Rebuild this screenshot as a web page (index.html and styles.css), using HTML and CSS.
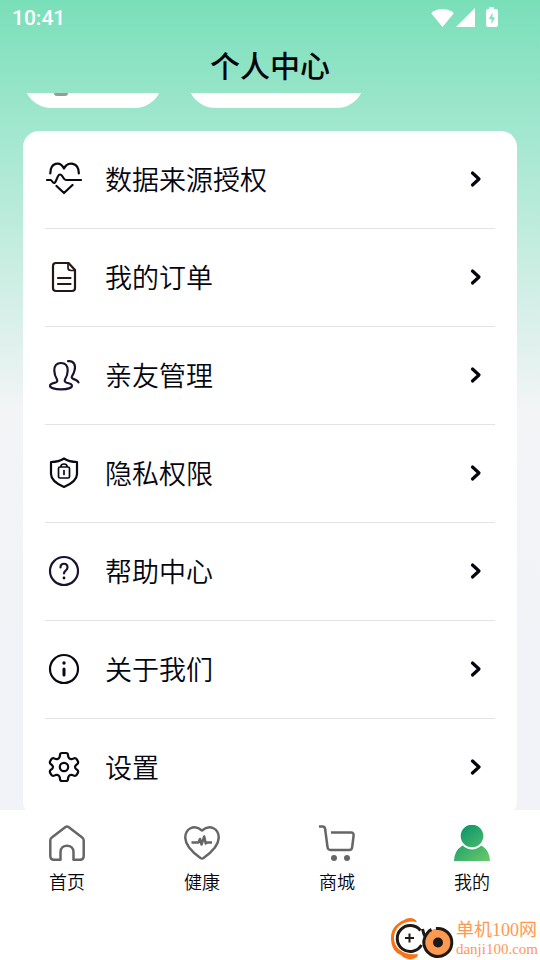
FILE: index.html
```html
<!DOCTYPE html>
<html lang="zh-CN">
<head>
<meta charset="utf-8">
<meta name="viewport" content="width=device-width, initial-scale=1">
<title>个人中心</title>
<link rel="stylesheet" href="styles.css">
</head>
<body>
<div class="app">
  <header class="header">
    <div class="status">
      <time class="clock">10:41</time>
      <svg class="status-icons" viewBox="0 0 68 20" aria-hidden="true">
        <path d="M.2 5.200C6-.3 17-.3 22.800 5.200L11.500 19Z"/>
        <path d="M25 19 44 0V19Z"/>
        <path fill-rule="evenodd" d="M58-1h5v2h2q2 0 2 2v14q0 2-2 2H57q-2 0-2-2V3q0-2 2-2h1ZM61.500 4.500 58 11h2.500v5L64 9.500h-2.500Z"/>
      </svg>
    </div>
    <h1 class="title">个人中心</h1>
  </header>

  <main class="content">
    <div class="pills">
      <div class="pill pill-small"><span class="pill-icon"></span></div>
      <div class="pill pill-large"></div>
    </div>
    <nav class="card" aria-label="个人中心">
      <a class="row" href="#source">
        <svg class="icon" viewBox="0 0 36 36"><path d="M4.300 12.500C4.300 1.500 14-.5 18 7.500 22-.5 33 1.500 32.800 12.500M1 19h3.500c1.500 0 2 3 3.500 3 2.500 0 3-8.500 6-8.500 3 0 3 5.500 6 5.500h15M10.500 25l7.500 7 8.500-8"/></svg>
        <span class="label">数据来源授权</span>
        <svg class="chevron" viewBox="0 0 12 18"><path d="m2.500 3 6.500 6-6.500 6"/></svg>
      </a>
      <a class="row" href="#orders">
        <svg class="icon icon-brown" viewBox="0 0 36 36"><path d="M10 4h12.500l6.500 7v18q0 3-3 3H10q-3 0-3-3V7q0-3 3-3Z"/><path class="thin" d="M22 4v4.500q0 3 3 3H29"/><path d="M12 19h12.500M12 25h12.500"/></svg>
        <span class="label">我的订单</span>
        <svg class="chevron" viewBox="0 0 12 18"><path d="m2.500 3 6.500 6-6.500 6"/></svg>
      </a>
      <a class="row" href="#family">
        <svg class="icon icon-violet" viewBox="0 0 36 36"><path d="M11 22.500C9.500 20 8.300 17 8.300 13.500 8.300 9 10.500 6 15 6s6.700 3 6.700 7.500c0 3.500-1.200 6.500-2.700 9-.8 1.600 0 2.800 1.800 3.200 3 .6 5.200 1.300 5.200 3 0 2.300-5 3.600-11 3.600S4 31 4 28.700c0-1.700 2.200-2.400 5.200-3 1.800-.4 2.600-1.600 1.800-3.200ZM22 4.200c6-.8 8 4.300 6.500 9.300-.5 2-1.300 3.800-2.300 5.300-.9 1.500-.5 2.500 1 3.100 2.800 1 4.800 1.800 5.300 3.600"/></svg>
        <span class="label">亲友管理</span>
        <svg class="chevron" viewBox="0 0 12 18"><path d="m2.500 3 6.500 6-6.500 6"/></svg>
      </a>
      <a class="row" href="#privacy">
        <svg class="icon" viewBox="0 0 36 36"><path d="M18 3.500Q23 7 31 7v12c0 6-6 10-13 13C11 29 5 25 5 19V7Q13 7 18 3.500Z"/><path class="thin" d="M14.800 12c0-4 6.400-4 6.400 0M18 15.500v4M14 12h8q1.500 0 1.500 1.500v8q0 1.500-1.500 1.500h-8q-1.500 0-1.500-1.500v-8Q12.500 12 14 12Z"/></svg>
        <span class="label">隐私权限</span>
        <svg class="chevron" viewBox="0 0 12 18"><path d="m2.500 3 6.500 6-6.500 6"/></svg>
      </a>
      <a class="row" href="#help">
        <svg class="icon icon-violet" viewBox="0 0 36 36"><circle cx="18" cy="18" r="14"/><path d="M14.500 14.500c0-5 7-5 7 0 0 3-3.500 3-3.500 6"/><circle class="dot" cx="18" cy="25" r="1.400"/></svg>
        <span class="label">帮助中心</span>
        <svg class="chevron" viewBox="0 0 12 18"><path d="m2.500 3 6.500 6-6.500 6"/></svg>
      </a>
      <a class="row" href="#about">
        <svg class="icon" viewBox="0 0 36 36"><circle cx="18" cy="18" r="14"/><path class="thick" d="M18 18v6"/><circle class="dot" cx="18" cy="12" r="1.700"/></svg>
        <span class="label">关于我们</span>
        <svg class="chevron" viewBox="0 0 12 18"><path d="m2.500 3 6.500 6-6.500 6"/></svg>
      </a>
      <a class="row" href="#settings">
        <svg class="icon" viewBox="0 0 36 36"><path d="M16 4h4q2 0 2 2 0 3 2.300 4 1.500.6 3-.4 2.200-1.200 3.500.8l1 1.700q1 2-.8 3.200Q29 16.500 29 18t2 2.700q1.800 1.200.8 3.200l-1 1.700q-1.300 2-3.500.8-1.500-1-3-.4Q22 27 22 30q0 2-2 2h-4q-2 0-2-2 0-3-2.300-4-1.500-.6-3 .4-2.200 1.200-3.500-.8l-1-1.700q-1-2 .8-3.200Q7 19.500 7 18t-2-2.700q-1.800-1.200-.8-3.200l1-1.700q1.300-2 3.500-.8 1.500 1 3 .4Q14 9 14 6q0-2 2-2Z"/><circle cx="18" cy="18" r="4.200"/></svg>
        <span class="label">设置</span>
        <svg class="chevron" viewBox="0 0 12 18"><path d="m2.500 3 6.500 6-6.500 6"/></svg>
      </a>
    </nav>
  </main>

  <footer class="footer">
    <nav class="tabs" aria-label="主导航">
      <a class="tab" href="#home">
        <svg class="tab-icon" viewBox="0 0 36 36"><path d="M11.500 34.800H5q-3.700 0-3.700-4V15.500q0-2 1.500-3L16.500 2q1.500-1 3 0l13.700 10.500q1.500 1 1.500 3v15.300q0 4-3.700 4h-6.500V27c0-8.500-13-8.500-13 0Z"/></svg>
        <span>首页</span>
      </a>
      <a class="tab" href="#health">
        <svg class="tab-icon" viewBox="0 0 36 36"><path d="M18 5.500C26-1.500 35 4 34.700 13 34.500 21 28 27 19.500 33q-1.500 1-3 0C8 27 1.500 21 1.300 13 1 4 10 -1.500 18 5.500Z"/><path d="M7.500 17.500h7l1.500-3.500 1.500 5.500 2.700-8 1.500 7 1.300-1h5"/></svg>
        <span>健康</span>
      </a>
      <a class="tab" href="#shop">
        <svg class="tab-icon" viewBox="0 0 36 36"><path d="M0 1.500h3.500Q6 1.500 6.200 4.500L8.500 22q.3 3 3 3h18.500q3 0 3.200-3l1.400-11.500q.2-3-2.600-3H12"/><circle class="wheel" cx="15" cy="33" r="3"/><circle class="wheel" cx="28" cy="33" r="3"/></svg>
        <span>商城</span>
      </a>
      <a class="tab" href="#mine" aria-current="page">
        <svg class="tab-icon tab-icon-active" viewBox="0 0 36 36"><defs><linearGradient id="leaf" gradientUnits="userSpaceOnUse" x1="8" y1="4" x2="34" y2="36"><stop offset="0" stop-color="#10996a"/><stop offset="1" stop-color="#69c96a"/></linearGradient></defs><circle cx="18" cy="11" r="11.300"/><path d="M8.500 20.500q9.500 8 19 0Q36 26 36 36H0Q0 26 8.500 20.500Z"/></svg>
        <span>我的</span>
      </a>
    </nav>
    <div class="brand">
      <svg class="brand-logo" viewBox="0 0 64 44" aria-hidden="true">
        <path d="M26 6C24 1 17 1 13 4 4 8 0 14 0 22c0 9 4 15 10 17 3 4 10 6 16 2l1-3C14 40 3 33 3 22 3 13 10 6 20 5.500Z" fill="#f97316"/>
        <path d="M29.500 14.500A13 13 0 1 0 30.500 29M31.500 13q1 6 4 9.500" fill="none" stroke="#1c1917" stroke-width="3"/>
        <circle cx="47" cy="26.500" r="14" fill="#ff9850"/>
        <path d="M45 12.600A14 14 0 1 1 35 19Q37 15 40.500 13.500" fill="none" stroke="#1c1917" stroke-width="3"/>
        <circle cx="47" cy="26.500" r="5" fill="#1c1917"/>
        <path d="M18.500 17.500v9M14 22h9" stroke="#1c1917" stroke-width="2"/>
      </svg>
      <div class="brand-text"><span class="brand-name">单机100网</span><span class="brand-url">danji100.com</span></div>
    </div>
  </footer>
</div>
</body>
</html>
```
FILE: styles.css
```css
* { box-sizing: border-box; }

body {
  margin: 0;
  color: #05050f;
  font-family: "Noto Sans CJK SC", sans-serif;
  font-weight: 350;
}

a { color: inherit; text-decoration: none; }

.app {
  display: flex;
  flex-direction: column;
  height: 100vh;
  background: linear-gradient(#79dfb9 0, #a2e7cf 130px, #f3f4f6 410px, #f2f3f8 640px);
}

.header { padding: 0 12px; }

.status {
  display: flex;
  align-items: center;
  justify-content: space-between;
  height: 36px;
  padding-right: 29px;
}

.clock {
  color: #fff;
  font: 500 21px/36px Roboto, sans-serif;
}

.status-icons {
  width: 68px;
  height: 20px;
  overflow: visible;
  fill: #fff;
}

.title {
  margin: 0;
  height: 57px;
  font-size: 30px;
  font-weight: 500;
  line-height: 57px;
  text-align: center;
}

.content {
  flex: 1;
  min-height: 0;
  padding: 0 23px;
  overflow: hidden;
}

.pills {
  display: flex;
  gap: 26px;
  margin: -39px 0 23px;
  padding-left: 1px;
}

.pill {
  display: flex;
  align-items: center;
  height: 54px;
  padding: 0 30px;
  border-radius: 27px;
  background: #fff;
}

.pill-small { width: 138px; }
.pill-large { width: 176px; }

.pill-icon {
  width: 14px;
  height: 30px;
  border-radius: 3px;
  background: #999;
}

.card {
  padding: 0 22px;
  border-radius: 16px;
  background: #fff;
}

.row {
  display: flex;
  align-items: center;
  height: 98px;
  padding: 0 13px 1px 0;
  border-bottom: 1px solid #e3e3e5;
}

.row:last-child { border-bottom-color: transparent; }

.icon {
  width: 36px;
  height: 36px;
  margin: 0 23px 0 1px;
  fill: none;
  stroke: #090914;
  stroke-width: 2.2;
  stroke-linecap: round;
  stroke-linejoin: round;
}

.icon-brown { stroke: #231815; }
.icon-violet { stroke: #1b1230; }
.thin { stroke-width: 1.7; }
.thick { stroke-width: 3; }
.dot { fill: #090914; stroke: none; }

.label {
  flex: 1;
  font-size: 27px;
  line-height: 40px;
}

.chevron {
  width: 12px;
  height: 18px;
  fill: none;
  stroke: #05050f;
  stroke-width: 3.2;
  stroke-linecap: round;
  stroke-linejoin: round;
}

.footer {
  height: 150px;
  background: #fff;
}

.tabs {
  display: grid;
  grid-template-columns: repeat(4, 1fr);
  height: 106px;
  padding-top: 15px;
}

.tab {
  display: flex;
  flex-direction: column;
  align-items: center;
  gap: 7px;
  padding-right: 1px;
  font-size: 18px;
  line-height: 26px;
}

.tab-icon {
  width: 36px;
  height: 36px;
  fill: none;
  stroke: #666;
  stroke-width: 2.5;
  stroke-linejoin: round;
}

.wheel { fill: #666; stroke: none; }
.tab-icon-active { fill: url(#leaf); stroke: none; }

.brand {
  display: flex;
  align-items: center;
  justify-content: flex-end;
  height: 44px;
  padding-right: 2px;
  gap: 1px;
  color: #ff9850;
}

.brand-logo { width: 64px; height: 44px; }

.brand-text {
  display: flex;
  flex-direction: column;
  padding-top: 2px;
  font-family: "Liberation Serif", "Noto Sans CJK SC", serif;
  font-weight: 400;
}

.brand-name {
  font-size: 18px;
  line-height: 20px;
}

.brand-url {
  font-size: 15px;
  line-height: 18px;
}
```
